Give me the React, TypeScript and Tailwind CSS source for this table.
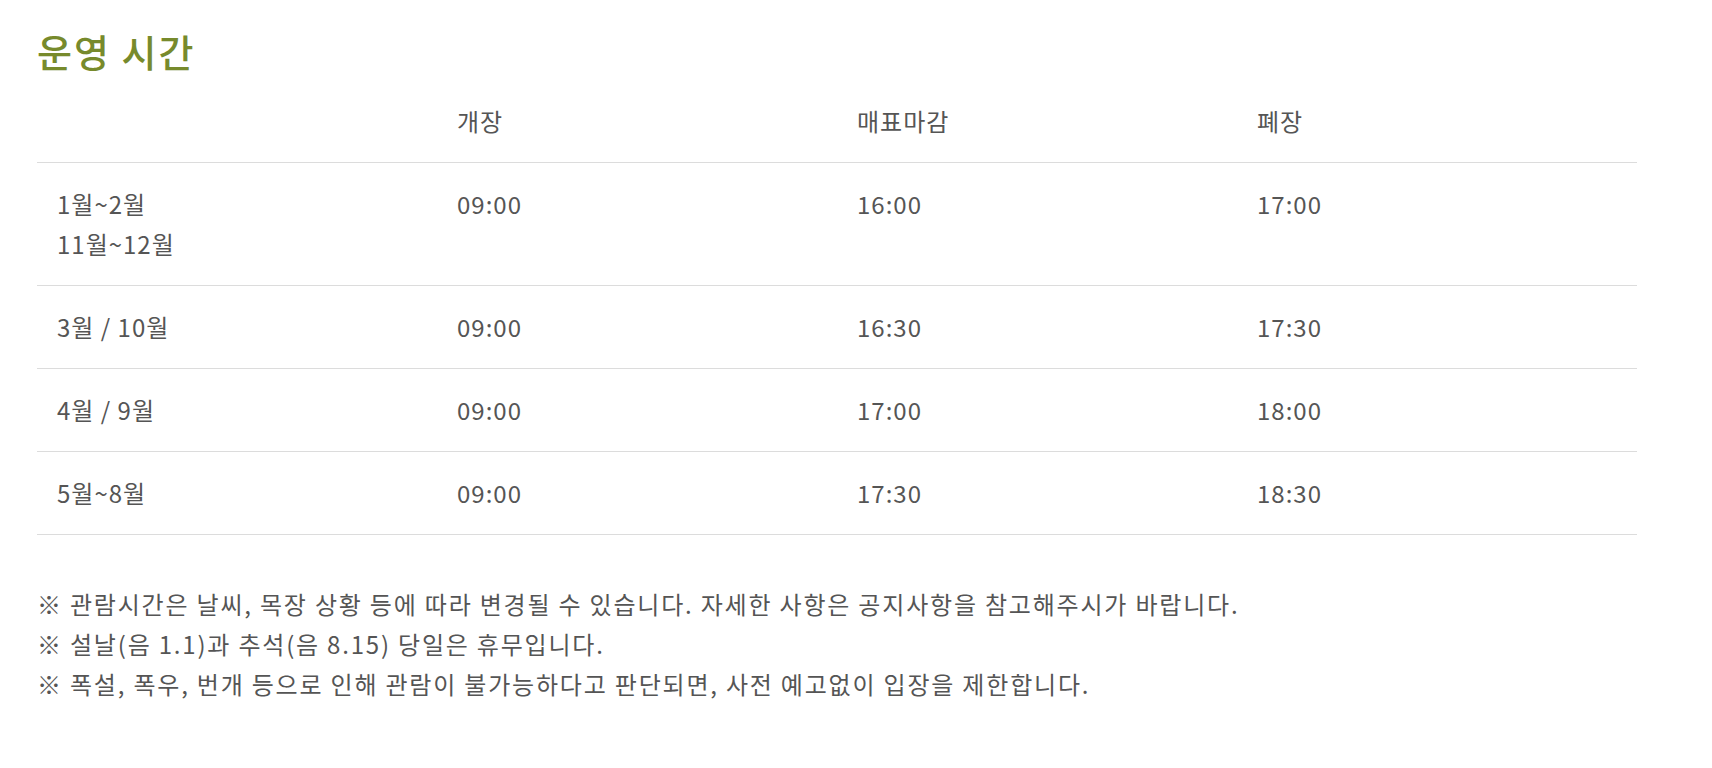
const rows = [
  { month: ["1월~2월", "11월~12월"], open: "09:00", ticket: "16:00", close: "17:00" },
  { month: ["3월 / 10월"], open: "09:00", ticket: "16:30", close: "17:30" },
  { month: ["4월 / 9월"], open: "09:00", ticket: "17:00", close: "18:00" },
  { month: ["5월~8월"], open: "09:00", ticket: "17:30", close: "18:30" },
]

const notes = [
  "※ 관람시간은 날씨, 목장 상황 등에 따라 변경될 수 있습니다. 자세한 사항은 공지사항을 참고해주시가 바랍니다.",
  "※ 설날(음 1.1)과 추석(음 8.15) 당일은 휴무입니다.",
  "※ 폭설, 폭우, 번개 등으로 인해 관람이 불가능하다고 판단되면, 사전 예고없이 입장을 제한합니다.",
]

export default function App() {
  return (
    <div className="min-h-screen bg-white px-[37px] pt-[22px] font-['Noto_Sans_CJK_KR',sans-serif] text-[#555]">
      {/* Title */}
      <h2 className="text-[38px] leading-[57px] font-medium tracking-[2px] text-[#778a2c]">운영 시간</h2>

      {/* Hours table */}
      <table className="mt-px w-[1600px] table-fixed border-collapse text-[24px] leading-[40px] tracking-[1px]">
        <thead>
          <tr>
            <th className="w-[400px] py-[21px] pl-5 text-left font-normal"></th>
            <th className="w-[400px] py-[21px] pl-5 text-left font-normal">개장</th>
            <th className="w-[400px] py-[21px] pl-5 text-left font-normal">매표마감</th>
            <th className="w-[400px] py-[21px] pl-5 text-left font-normal">폐장</th>
          </tr>
        </thead>
        <tbody>
          {rows.map((row, i) => (
            <tr key={i} className="border-t border-b border-[#dcdcdc]">
              <td className="py-[21px] pl-5 align-top">
                {row.month.map((m) => (
                  <div key={m}>{m}</div>
                ))}
              </td>
              <td className="py-[21px] pl-5 align-top">{row.open}</td>
              <td className="py-[21px] pl-5 align-top">{row.ticket}</td>
              <td className="py-[21px] pl-5 align-top">{row.close}</td>
            </tr>
          ))}
        </tbody>
      </table>

      {/* Notes */}
      <div className="mt-[49px] text-[24px] leading-[40px] tracking-[1.8px]">
        {notes.map((n) => (
          <p key={n}>{n}</p>
        ))}
      </div>
    </div>
  )
}
